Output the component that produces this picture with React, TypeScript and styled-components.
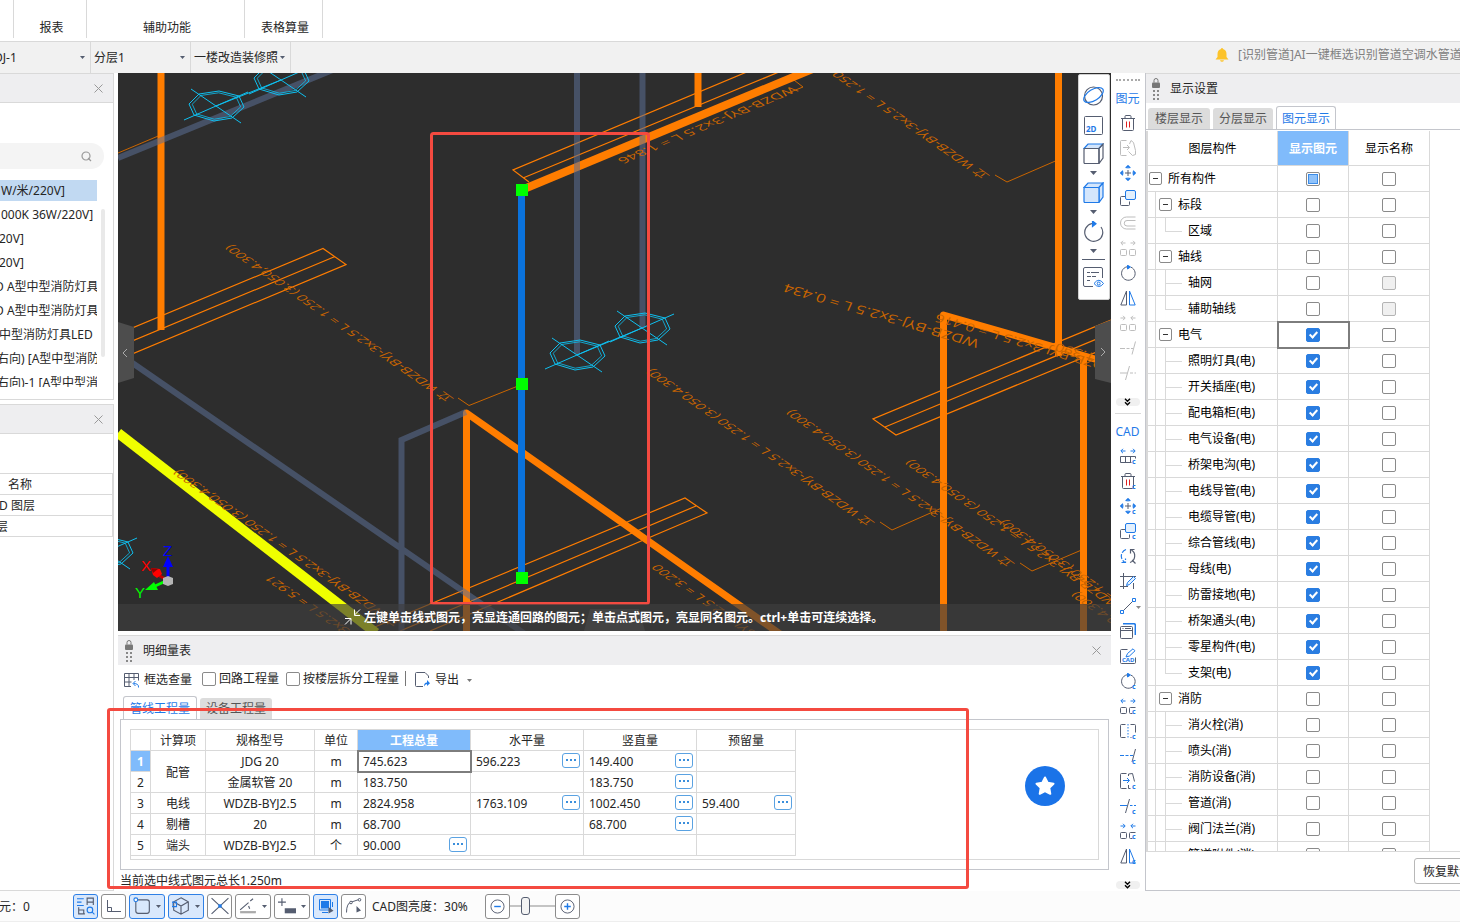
import React from "react";
import styled, { createGlobalStyle, css } from "styled-components";

const INK = "#555d70";
const BLUE = "#1f7ae8";
const LINE = "#d9d9d9";
const MUTE = "#bdbdbd";

const Global = createGlobalStyle`
  *, *::before, *::after { box-sizing: border-box; }
  html, body { margin: 0; padding: 0; background: #fff; }
  body, button, input, select, table {
    font-family: "Noto Sans", "Noto Sans CJK SC", sans-serif;
    font-size: 12px;
    line-height: 16px;
    color: #262626;
  }
  button { background: none; border: 0; padding: 0; margin: 0; }
  svg { display: block; }
`;

/* ---------- page frame ---------- */

const Page = styled.div`
  display: flex;
  flex-direction: column;
  height: 100vh;
  overflow: hidden;
`;

const Ribbon = styled.nav`
  display: flex;
  flex: none;
  height: 42px;
  border-bottom: 1px solid ${LINE};
`;

const RibbonGroup = styled.div<{ $w: number }>`
  width: ${(p) => p.$w}px;
  height: 38px;
  padding: 20px 0 0 3px;
  text-align: center;
  white-space: nowrap;
  border-right: 1px solid ${LINE};
`;

const SubBar = styled.div`
  display: flex;
  flex: none;
  height: 31px;
  background: #f1f1f1;
`;

const Picker = styled.label<{ $w: number; $pad: number }>`
  position: relative;
  display: flex;
  align-items: center;
  width: ${(p) => p.$w}px;
  border-right: 1px solid ${LINE};
  overflow: hidden;
  select {
    appearance: none;
    border: 0;
    background: none;
    width: 90px;
    padding: 0;
    margin-left: ${(p) => p.$pad}px;
    height: 28px;
  }
  svg { position: absolute; right: 5px; top: 14px; }
`;

const Notice = styled.a`
  display: flex;
  align-items: center;
  gap: 9px;
  width: 245px;
  padding-bottom: 5px;
  margin-left: auto;
  color: #808080;
  white-space: nowrap;
  text-decoration: none;
  overflow: hidden;
  svg { flex: none; }
`;

const Main = styled.main`
  display: flex;
  flex: 1;
  min-height: 0;
`;

const LeftColumn = styled.aside`
  display: flex;
  flex: none;
  flex-direction: column;
  gap: 4px;
  width: 114px;
  margin-right: 4px;
`;

const CenterColumn = styled.section`
  display: flex;
  flex: 1;
  flex-direction: column;
  gap: 4px;
  min-width: 0;
`;

/* ---------- shared pieces ---------- */

const PanelHead = styled.header`
  display: flex;
  flex: none;
  align-items: center;
  height: 30px;
  background: #eeeef0;
  border-top: 1px solid ${LINE};
`;

const PanelTitle = styled.h2`
  margin: 0 0 0 10px;
  font-size: 12px;
  font-weight: 400;
`;

const CloseButton = styled.button<{ $gap: number }>`
  margin-left: auto;
  margin-right: ${(p) => p.$gap}px;
`;

const Check = styled.input<{ $partial?: boolean }>`
  appearance: none;
  flex: none;
  position: relative;
  width: 14px;
  height: 14px;
  margin: 0;
  border: 1px solid #8a8a8a;
  border-radius: 2px;
  background: #fff;
  &:disabled { background: #f0f0f0; border-color: #b4b4b4; }
  &:checked { background: #2a7de1; border-color: #2a7de1; }
  &:checked::after {
    content: "";
    position: absolute;
    left: 4px;
    top: 1px;
    width: 5px;
    height: 8px;
    border: solid #fff;
    border-width: 0 2px 2px 0;
    transform: rotate(42deg);
  }
  ${(p) =>
    p.$partial &&
    css`
      &::after {
        content: "";
        position: absolute;
        inset: 1px;
        background: #8fc2fa;
        border: 1px solid #3b8ce8;
      }
    `}
`;

const Tabs = styled.div`
  display: flex;
  flex: none;
  align-items: flex-end;
  height: 23px;
`;

const Tab = styled.button<{ $active?: boolean; $w: number }>`
  width: ${(p) => p.$w}px;
  height: 21px;
  border-radius: 3px 3px 0 0;
  background: #dcdcdc;
  color: #555;
  white-space: nowrap;
  ${(p) =>
    p.$active &&
    css`
      height: 24px;
      margin-bottom: -1px;
      background: #fff;
      border: 1px solid #c4c6cc;
      border-bottom: 0;
      color: ${BLUE};
    `}
`;

const Spacer = styled.span<{ $h: number }>`
  flex: none;
  height: ${(p) => p.$h}px;
`;

const Nudge = styled.span<{ $shift: number }>`
  margin-left: ${(p) => p.$shift}px;
`;

/* ---------- left column ---------- */

const SidePanel = styled.section<{ $grow?: boolean }>`
  display: flex;
  flex-direction: column;
  flex: ${(p) => (p.$grow ? 1 : "none")};
  border-right: 1px solid ${LINE};
  border-bottom: 1px solid ${LINE};
  ${PanelHead} { border-bottom: 1px solid ${LINE}; }
`;

const Search = styled.label`
  display: flex;
  align-items: center;
  height: 26px;
  width: 104px;
  margin: 40px 0 11px;
  padding-right: 12px;
  border-radius: 0 13px 13px 0;
  background: #f4f4f4;
  input {
    flex: 1;
    min-width: 0;
    border: 0;
    background: none;
    outline: 0;
  }
`;

const ListArea = styled.div`
  display: flex;
  height: 207px;
  margin-bottom: 12px;
`;

const List = styled.ul`
  flex: none;
  width: 97px;
  margin: 0;
  padding: 0;
  list-style: none;
  overflow: hidden;
`;

const ListRow = styled.li<{ $shift: number; $on?: boolean }>`
  height: 21px;
  margin-bottom: 3px;
  line-height: 22px;
  white-space: nowrap;
  overflow: hidden;
  text-indent: ${(p) => p.$shift}px;
  background: ${(p) => (p.$on ? "#c1d9f2" : "none")};
`;

const Scroll = styled.div`
  width: 4px;
  height: 148px;
  margin: 29px 0 0 4px;
  border-radius: 2px;
  background: #e9e9e9;
`;

const LayerTable = styled.table`
  width: 113px;
  margin-top: 39px;
  border-spacing: 0;
  border-top: 1px solid ${LINE};
  th, td {
    height: 21px;
    padding: 2px 0 0;
    border-right: 1px solid ${LINE};
    border-bottom: 1px solid ${LINE};
    font-weight: 400;
    text-align: left;
    white-space: nowrap;
  }
  th { padding-left: 8px; }
`;

/* ---------- drawing view ---------- */

const View = styled.div`
  position: relative;
  flex: 1;
  min-height: 0;
  background: #2d2d2d;
  overflow: hidden;
  > svg { width: 100%; height: 100%; }
`;

const Hint = styled.div`
  position: absolute;
  left: 0;
  right: 0;
  bottom: 0;
  display: flex;
  align-items: center;
  gap: 2px;
  height: 27px;
  padding-left: 226px;
  background: rgba(62, 62, 62, 0.66);
  color: #fff;
  font-weight: 700;
  white-space: nowrap;
`;

const ViewTools = styled.div`
  position: absolute;
  top: 1px;
  right: 1px;
  display: flex;
  flex-direction: column;
  align-items: center;
  width: 32px;
  height: 226px;
  padding: 11px 1px 0 0;
  border: 1px solid #d0d0d0;
  border-radius: 2px;
  background: #fff;
`;

const ViewTool = styled.button<{ $h: number }>`
  display: flex;
  flex-direction: column;
  align-items: center;
  gap: 7px;
  height: ${(p) => p.$h}px;
`;

const Rule = styled.hr`
  width: 23px;
  margin: 0 0 7px;
  border: 0;
  border-top: 1px solid ${INK};
`;

/* ---------- detail panel ---------- */

const Detail = styled.section`
  position: relative;
  flex: none;
  display: flex;
  flex-direction: column;
`;

const DetailBar = styled.div`
  display: flex;
  align-items: center;
  height: 27px;
  padding-left: 6px;
  white-space: nowrap;
`;

const BarButton = styled.button<{ $gap: number }>`
  display: flex;
  align-items: center;
  gap: 4px;
  margin-right: ${(p) => p.$gap}px;
  padding-top: 3px;
`;

const BarCheck = styled.label`
  display: flex;
  align-items: center;
  gap: 3px;
  margin-right: 7px;
`;

const Divider = styled.span`
  width: 1px;
  height: 15px;
  margin: 0 9px 0 -1px;
  background: #777;
`;

const DetailTabs = styled(Tabs)`
  gap: 3px;
  margin-top: 4px;
  padding-left: 5px;
  ${Tab} { padding-top: 1px; }
`;

const DetailBody = styled.div`
  margin: 0 2px;
  padding: 9px;
  border: 1px solid #c4c6cc;
`;

const Frame = styled.div`
  border: 1px solid ${LINE};
  padding-bottom: 3px;
`;

const QtyTable = styled.table`
  width: 665px;
  table-layout: fixed;
  border-spacing: 0;
  th, td {
    height: 21px;
    padding: 2px 0 0;
    border-right: 1px solid ${LINE};
    border-bottom: 1px solid ${LINE};
    font-weight: 400;
    text-align: center;
    white-space: nowrap;
  }
`;

const HeadCell = styled.th<{ $on?: boolean }>`
  ${(p) =>
    p.$on &&
    css`
      && { background: #80bbfb; color: #fff; font-weight: 700; }
    `}
`;

const QtyCell = styled.td<{ $on?: boolean }>`
  ${(p) =>
    p.$on &&
    css`
      outline: 2px solid #7d7d7d;
      outline-offset: -1px;
    `}
  > div {
    display: flex;
    align-items: center;
    justify-content: space-between;
    padding: 0 3px 0 5px;
  }
`;

const More = styled.button`
  display: flex;
  align-items: center;
  justify-content: center;
  gap: 2px;
  width: 18px;
  height: 15px;
  margin-bottom: 3px;
  border: 1px solid #5aa2e2;
  border-radius: 3px;
  margin-top: -1px;
  i { width: 2px; height: 2px; background: #3b8fdc; }
`;

const Summary = styled.p`
  height: 21px;
  margin: 0;
  padding: 3px 0 0 2px;
`;

const Highlight = styled.div`
  position: absolute;
  left: -11px;
  right: 142px;
  top: 73px;
  bottom: 2px;
  border: 3px solid #f44a40;
  border-radius: 3px;
  pointer-events: none;
`;

const StarButton = styled.button`
  position: absolute;
  right: 46px;
  top: 131px;
  display: flex;
  align-items: center;
  justify-content: center;
  width: 40px;
  height: 40px;
  border-radius: 50%;
  background: #1a73e8;
`;

/* ---------- edit toolbar ---------- */

const EditBar = styled.div`
  display: flex;
  flex: none;
  flex-direction: column;
  align-items: center;
  width: 34px;
  padding-right: 1px;
  overflow: hidden;
`;

const Grip = styled.div`
  width: 24px;
  height: 2px;
  margin: 6px 0 8px;
  border-top: 2px dotted #aaa;
`;

const BarHead = styled.span`
  height: 20px;
  line-height: 20px;
  color: ${BLUE};
`;

const EditTool = styled.button`
  position: relative;
  display: flex;
  flex: none;
  align-items: center;
  justify-content: center;
  width: 34px;
  height: 25px;
`;

const DropMark = styled.span`
  position: absolute;
  right: 4px;
  bottom: 9px;
`;

const Expander = styled.button`
  display: flex;
  flex: none;
  align-items: center;
  justify-content: center;
  width: 24px;
  height: 8px;
  border-radius: 4px;
  background: #f0f0f0;
`;

const EditRule = styled.hr`
  width: 26px;
  margin: 7px 0 8px;
  border: 0;
  border-top: 1px solid ${LINE};
`;

/* ---------- display settings ---------- */

const RightColumn = styled.aside`
  display: flex;
  flex: none;
  flex-direction: column;
  width: 315px;
  border-left: 1px solid #c4c6cc;
  border-bottom: 1px solid #c4c6cc;
`;

const RightTabs = styled(Tabs)`
  gap: 3px;
  margin-top: 4px;
  padding-left: 2px;
  height: 22px;
`;

const TreeArea = styled.div`
  flex: 1;
  min-height: 0;
  overflow: hidden;
  padding-top: 1px;
  border-top: 1px solid #c4c6cc;
`;

const TreeTable = styled.table`
  width: 284px;
  table-layout: fixed;
  border-spacing: 0;
  border-left: 2px solid ${LINE};
  color: #000;
  th, td {
    height: 26px;
    padding: 0;
    border-right: 1px solid ${LINE};
    border-bottom: 1px solid ${LINE};
    font-weight: 400;
  }
  th { height: 35px; padding-top: 2px; }
`;

const TickCell = styled.td<{ $on?: boolean }>`
  ${(p) =>
    p.$on &&
    css`
      outline: 2px solid #7d7d7d;
      outline-offset: -1px;
    `}
  input { display: block; margin: 0 auto; }
`;

const TreeCell = styled.div`
  display: flex;
  align-items: center;
  height: 25px;
  padding-left: 7px;
  white-space: nowrap;
`;

const Rail = styled.span`
  align-self: stretch;
  width: 10px;
  border-left: 1px solid ${LINE};
`;

const Branch = styled.span<{ $last?: boolean }>`
  position: relative;
  width: 23px;
  align-self: stretch;
  &::before {
    content: "";
    position: absolute;
    left: 0;
    top: 0;
    height: ${(p) => (p.$last ? "50%" : "100%")};
    border-left: 1px solid ${LINE};
  }
  &::after {
    content: "";
    position: absolute;
    left: 0;
    top: 50%;
    width: 17px;
    border-top: 1px solid ${LINE};
  }
`;

const Toggle = styled.button`
  display: flex;
  align-items: center;
  justify-content: center;
  width: 13px;
  height: 13px;
  margin: 0 6px 0 -6px;
  border: 1px solid #8a8a8a;
  border-radius: 2px;
  background: #fff;
  &::after { content: ""; width: 5px; height: 1px; background: #333; }
`;

const RightFoot = styled.footer`
  display: flex;
  flex: none;
  justify-content: flex-end;
  height: 39px;
  padding-top: 6px;
  border-top: 1px solid ${LINE};
  overflow: hidden;
`;

const ResetButton = styled.button`
  flex: none;
  width: 66px;
  height: 26px;
  padding-top: 1px;
  margin-right: -20px;
  border: 1px solid #b8b8b8;
  border-radius: 3px;
`;

/* ---------- status bar ---------- */

const StatusBar = styled.footer`
  display: flex;
  flex: none;
  align-items: center;
  gap: 3px;
  height: 31px;
  background: #fcfcfc;
  border-bottom: 1px solid #eee;
  white-space: nowrap;
`;

const Count = styled.span`
  width: 71px;
  margin-left: -1px;
  padding-top: 1px;
  overflow: hidden;
`;

const StatusButton = styled.button<{ $on?: boolean; $wide?: boolean }>`
  display: flex;
  flex: none;
  align-items: center;
  justify-content: center;
  gap: 5px;
  width: ${(p) => (p.$wide ? 36 : 25)}px;
  height: 25px;
  border: 1px solid ${(p) => (p.$on ? "#2f80e6" : "#8c8c8c")};
  border-radius: 3px;
  background: ${(p) => (p.$on ? "#d9e8fc" : "#fff")};
`;

const Brightness = styled.label`
  width: 113px;
  margin-left: 3px;
  padding-top: 1px;
`;

const Zoomer = styled.div`
  display: flex;
  align-items: center;
  margin-left: -3px;
`;

const Range = styled.input`
  appearance: none;
  width: 45px;
  height: 20px;
  margin: 0;
  background: none;
  &::-webkit-slider-runnable-track { height: 2px; background: #c4c4c4; }
  &::-webkit-slider-thumb {
    appearance: none;
    width: 9px;
    height: 18px;
    margin-top: -8px;
    border: 1px solid ${INK};
    border-radius: 3px;
    background: #f4f4f4;
  }
`;

/* ---------- icons ---------- */

type IcoProps = { children: React.ReactNode; size?: number; color?: string };
const Ico = ({ children, size = 16, color = INK }: IcoProps) => (
  <svg width={size} height={size} viewBox="0 0 16 16" fill="none" stroke={color} strokeWidth="1" aria-hidden="true">
    {children}
  </svg>
);

const Caret = ({ w = 5, color = INK }: { w?: number; color?: string }) => (
  <svg width={w} height={w > 5 ? 4 : 3} viewBox="0 0 6 3" preserveAspectRatio="none" aria-hidden="true">
    <path d="M0 0h6L3 3z" fill={color} />
  </svg>
);

const CloseIcon = () => (
  <svg width="9" height="9" viewBox="0 0 9 9" stroke="#999" aria-hidden="true">
    <path d="M.5.5l8 8M8.500.5l-8 8" />
  </svg>
);

const LockGrip = () => (
  <svg width="8" height="22" viewBox="0 0 8 22" aria-hidden="true">
    <path d="M2 4.500V2.500a2 2 0 0 1 4 0V4.500" fill="none" stroke="#777" />
    <rect x="0" y="4.500" width="8" height="5.500" rx="1" fill="#777" />
    <g fill="#888">
      {[12, 16, 20].map((y) => (
        <g key={y}>
          <rect x="1" y={y} width="2" height="2" />
          <rect x="5" y={y} width="2" height="2" />
        </g>
      ))}
    </g>
  </svg>
);

const C = () => (
  <text x="12" y="16" fontSize="7" fontWeight="700" fill={BLUE} stroke="none">
    c
  </text>
);

const DoubleDown = () => (
  <svg width="7" height="8" viewBox="0 0 7 8" fill="none" stroke="#000" strokeWidth="1.400" aria-hidden="true">
    <path d="M1 .7l2.500 2.500L6 .7M1 4.200l2.500 2.500L6 4.200" />
  </svg>
);

const trash = (
  <>
    <path d="M1 3.500h14M5 3V1.500Q5 .5 6 .5h4q1 0 1 1V3M2.500 3.500v11q0 1 1 1h9q1 0 1-1v-11" />
    <path d="M6.500 6.500v6M9.500 6.500v6" stroke="#e02020" />
  </>
);
const move = (
  <>
    <path d="M8 5v6M5 8h6" />
    <path
      d="M8 3.500V.7M5.700 3L8 .7 10.300 3M8 12.500v2.800M5.700 13L8 15.300l2.300-2.300M3.500 8H.7M3 5.700L.7 8 3 10.300M12.500 8h2.800M13 5.700L15.300 8 13 10.300"
      stroke={BLUE}
      strokeWidth="1.300"
    />
  </>
);
const copy = (
  <>
    <path d="M5.500 6.500h-4q-1 0-1 1v7q0 1 1 1h7q1 0 1-1v-3" />
    <rect x="5.500" y=".5" width="10" height="9" rx="1.500" fill="#e3f0fd" stroke={BLUE} />
  </>
);
const rotate = (
  <>
    <path d="M11 2.200A6.800 6.800 0 1 1 7 1.800" />
    <path d="M7.500.2L10.500 2 7.500 4z" fill={BLUE} stroke={BLUE} />
  </>
);
const mirror = (
  <>
    <path d="M6.500 1v14H.8z" />
    <path d="M9.500 1v14h5.700z" stroke={BLUE} />
  </>
);
const twoBoxes = (
  <path d="M1.500 9.500h4q1 0 1 1v4q0 1-1 1h-4q-1 0-1-1v-4q0-1 1-1zM10.500 9.500h4q1 0 1 1v4q0 1-1 1h-4q-1 0-1-1v-4q0-1 1-1z" />
);
const outArrows = "M5.500 3H1M3 .8L.8 3 3 5.200M10.500 3H15M13 .8L15.200 3 13 5.200";
const inArrows = "M.5 3h4.500M3 .8L5.200 3 3 5.200M15.500 3H11M13 .8L10.800 3 13 5.200";

const elementTools: [string, React.ReactNode][] = [
  ["删除", <Ico>{trash}</Ico>],
  ["复制到", <Ico color={MUTE}><path d="M6.500.5h-5q-1 0-1 1v13q0 1 1 1h5M3 7.500h6M7 5l2.500 2.500L7 10M9.500 4L11 .5l2.500 2 2 8v4l-3 1-4-4" /></Ico>],
  ["移动", <Ico>{move}</Ico>],
  ["复制", <Ico>{copy}</Ico>],
  ["偏移", <Ico color={MUTE}><path d="M15.500 2H6.500a6 6 0 0 0 0 12h9M15.500 5.500H7a2.700 2.700 0 0 0 0 5.500h8.500" /></Ico>],
  ["打断", <Ico color={MUTE}><path d={outArrows} />{twoBoxes}</Ico>],
  ["旋转", <Ico>{rotate}</Ico>],
  ["镜像", <Ico>{mirror}</Ico>],
  ["合并", <Ico color={MUTE}><path d={inArrows} />{twoBoxes}</Ico>],
  ["延伸", <Ico color={MUTE}><path d="M0 8.500h5M6.500 8.500h3M11 8.500h2M15.500 1.500l-3.500 13" /></Ico>],
  ["修剪", <Ico color={MUTE}><path d="M0 8h7M10 8h3M14.500 8h1.500M9.500 1L5.500 15" /></Ico>],
];

const cadTools: [string, React.ReactNode][] = [
  ["设置比例", <Ico><path d={outArrows} stroke={BLUE} /><path d="M11.500 14.500H.5v-6h15v2M5.500 8.500v6M10.500 8.500v6" /><C /></Ico>],
  ["C删除", <Ico>{trash}<C /></Ico>],
  ["C移动", <Ico>{move}<C /></Ico>],
  ["C复制", <Ico>{copy}<C /></Ico>],
  ["还原CAD", <Ico><path d="M6 1.500A7 7 0 0 0 4.500 14M1.500 14.500h4v-4" stroke={BLUE} strokeWidth="1.200" strokeDasharray="5 1.500" /><path d="M10 14.500A7 7 0 0 0 11.500 2M14.500 1.500h-4v4M12 12l3.500 3.500" strokeWidth="1.200" /></Ico>],
  ["裁剪", <Ico><path d="M3.500 0v16M0 3.500h16M0 13.500h8M13.500 10v6" /><path d="M6.500 12.500l1-3 6-6 2 2-6 6z" stroke={BLUE} fill="#e3f0fd" /></Ico>],
  ["直线", <Ico><path d="M2 14L14 2" /><path d="M.5 12.500h3v3h-3zM12.500.5h3v3h-3z" stroke={BLUE} fill="#fff" /></Ico>],
  ["窗口", <Ico><rect x=".5" y="3.500" width="12" height="12" rx="1" /><path d="M.5 7.500h12M2.500 5.500h1M5 5.500h6" /><path d="M3 .8h11q1.300 0 1.300 1.200v10" stroke={BLUE} strokeWidth="1.500" /></Ico>],
  ["编辑CAD", <Ico><path d="M7.500 1.500h-6q-1 0-1 1v12q0 1 1 1h13q1 0 1-1v-5" /><path d="M6 9l1.500-3.500L13 .8l2 2L9.500 8z" stroke={BLUE} /><text x="2" y="14" fontSize="6" fontWeight="700" fill={BLUE} stroke="none">CAD</text></Ico>],
  ["C旋转", <Ico>{rotate}<C /></Ico>],
  ["C打断", <Ico><path d={outArrows} stroke={BLUE} /><path d="M1.500 9.500h4q1 0 1 1v4q0 1-1 1h-4q-1 0-1-1v-4q0-1 1-1zM15.500 9.500h-5q-1 0-1 1v4q0 1 1 1h2" /><C /></Ico>],
  ["C分割", <Ico><path d="M5.500 1.500h-4q-1 0-1 1v11q0 1 1 1h4M10.500 1.500h4q1 0 1 1v7M10.500 14.500h1" /><path d="M8 1v14" stroke={BLUE} strokeDasharray="1.500 1.500" /><C /></Ico>],
  ["C延伸", <Ico><path d="M0 7.500h4M5.500 7.500h3M10 7.500h3" stroke={BLUE} /><path d="M15.500 1l-3.500 13" /><C /></Ico>],
  ["C复制到", <Ico><path d="M6.500.5h-5q-1 0-1 1v13q0 1 1 1h5M8.500 3V1l4-.5 2 8M8.500 12v3.500h2" /><path d="M3 7.500h6M7 5l2.500 2.500L7 10" stroke={BLUE} /><C /></Ico>],
  ["C修剪", <Ico><path d="M0 7.500h7M10 7.500h2.500M14 7.500h2" stroke={BLUE} /><path d="M9.500 1L5.500 15" /><C /></Ico>],
  ["C合并", <Ico><path d={inArrows} stroke={BLUE} /><path d="M1.500 9.500h4q1 0 1 1v4q0 1-1 1h-4q-1 0-1-1v-4q0-1 1-1zM15.500 9.500h-5q-1 0-1 1v4q0 1 1 1h2" /><C /></Ico>],
  ["C镜像", <Ico>{mirror}<C /></Ico>],
];

const Cube = ({ filled }: { filled?: boolean }) => (
  <svg width="21" height="21" viewBox="0 0 21 21" fill="none" stroke={filled ? BLUE : INK} strokeWidth="1.200" aria-hidden="true">
    <path d="M1 5.500L5 1h15l-4 4.500z" fill="#d4e6fc" stroke={BLUE} />
    <path d="M16 5.500L20 1v14l-4 5.500z" fill={filled ? "#d4e6fc" : "none"} />
    <rect x="1" y="5.500" width="15" height="15" rx="1" fill={filled ? "#d4e6fc" : "none"} />
  </svg>
);

/* ---------- drawing content ---------- */

const OCT = [[-17, -12], [3, -15], [23, -10], [28, 1], [16, 12], [-2, 15], [-22, 9], [-27, -2]];
const poly = (k: number) => OCT.map(([x, y]) => `${x * k},${y * k}`).join(" ");

const Lamp = ({ x, y }: { x: number; y: number }) => (
  <g transform={`translate(${x} ${y})`} fill="none" stroke="#0fc0f0" strokeWidth="1">
    <polygon points={poly(1)} />
    <polygon points={poly(0.88)} opacity=".8" />
    <path d="M-25-17L25 17M-32 14L32-14" />
  </g>
);

/* Text laid on the floor plane: each axis holds the reading direction and the glyph-down direction. */
const AXES = {
  a: "-0.82 -0.57 0.82 -0.34",
  b: "-0.923 0.385 -0.6 -0.42",
  c: "-0.96 -0.28 0.3 -0.66",
};

type NoteProps = { x: number; y: number; axis?: keyof typeof AXES; size?: number; children: React.ReactNode };
const Note = ({ x, y, axis = "a", size = 14, children }: NoteProps) => (
  <text
    transform={`matrix(${AXES[axis]} ${x} ${y})`}
    fontSize={size}
    fill="#c96500"
    fontFamily='"Open Sans", "Noto Sans CJK SC", sans-serif'
  >
    {children}
  </text>
);

const RISER = "立 WDZB-BYJ-3x2.5 L = 1.250 (3.050,4.300)";

const Drawing = () => (
  <svg viewBox="118 73 993 558" preserveAspectRatio="xMidYMid slice" role="img" aria-label="三维管线视图">
    <g fill="none" stroke="#ff7d00" strokeWidth="1.200">
      <path d="M118 334L323 248.500L346 264.500L118 360M118 347L335 256.500" />
      <path d="M835 35L513 170L529 182M820 55L523 178" />
      <path d="M370 629L685 498L707 513L430 631M400 631L696 506" />
      <path d="M1111 320L873 419L896 435L1111 346M1111 333L885 427" />
    </g>
    <g fill="none" stroke="#c96500">
      <path d="M118 153L163 134" />
      <path d="M458 398L469 405.500L518 386" />
      <path d="M995 175L1007 182L1060 159" />
      <path d="M880 522L892 530L944 507" />
      <path d="M1020 563L1032 571L1084 549" />
      <path d="M788 93L803 87L790 77" />
    </g>
    <g fill="none" stroke="#ff7d00" strokeWidth="7">
      <path d="M161 73V330M698 73V107M1058.500 73V356" />
      <path d="M524 189L815 68" strokeWidth="8" />
      <path d="M943.500 631V315L1058 348L1111 364M1083.500 356V631" strokeLinejoin="round" />
      <path d="M466.500 631V413L783 636" strokeLinejoin="round" />
    </g>
    <path d="M118 433L376 633" stroke="#f0ff00" strokeWidth="10" />
    <path d="M521.500 190V578" stroke="#0a72dc" strokeWidth="7" />
    <g fill="none" stroke="#5b6f96" strokeOpacity=".55" strokeWidth="6">
      <path d="M118 158L335 69M577 73V354M642.500 73V328" />
      <path d="M118 353L525 634M401.500 631V440L466 412" />
    </g>
    <path d="M216 106L281 80M577 355L642 328" stroke="#0fc0f0" />
    <Lamp x={216} y={106} />
    <Lamp x={281} y={80} />
    <Lamp x={577} y={355} />
    <Lamp x={642} y={328} />
    <Lamp x={105} y={552} />

    <Note x={454} y={399}>{RISER}</Note>
    <Note x={875} y={523}>{RISER}</Note>
    <Note x={1015} y={564}>{RISER}</Note>
    <Note x={1134} y={614}>{RISER}</Note>
    <Note x={1228} y={674}>{RISER}</Note>
    <Note x={1300} y={746}>{RISER}</Note>
    <Note x={990} y={176}>{RISER}</Note>
    <Note x={402} y={624}>{RISER}</Note>
    <Note x={408} y={670}>WDZB-BYJ-3x2.5 L = 5.921</Note>
    <Note x={795} y={659}>WDZB-BYJ-3x2.5 L = 3.200</Note>
    <Note x={792} y={86} axis="b" size={16}>WDZB-BYJ-3x2.5 L = 1.846</Note>
    <Note x={980} y={340} axis="c" size={17}>WDZB-BYJ-3x2.5 L = 0.434</Note>
    <Note x={1120} y={367} axis="c" size={16}>WDZB-BYJ-3x2.5 L = 0.416</Note>
    <Note x={1240} y={396} axis="c" size={16}>WDZB-BYJ-3x2.5 L = 1.390</Note>

    <g fill="#00ff00">
      <rect x="516" y="184" width="12" height="12" />
      <rect x="516" y="378" width="12" height="12" />
      <rect x="516" y="572" width="12" height="12" />
    </g>
    <rect x="431.500" y="133.500" width="217" height="470" rx="2" fill="none" stroke="#f44a40" strokeWidth="3" />

    <g strokeWidth="3" fill="none">
      <path d="M168 578V566" stroke="#0000ff" />
      <path d="M167 580L158 575" stroke="#c00000" />
      <path d="M166 581L155 586" stroke="#00ff00" />
    </g>
    <path d="M168 556L173 567H163z" fill="#0000ff" />
    <path d="M151 568L160 569L162 574L157 578L153 575z" fill="#ff0000" />
    <path d="M151 568L158 569L153 573z" fill="#900000" />
    <path d="M145 590L154 582L158 590z" fill="#00ff00" />
    <path d="M163 578L168 576L173 578V584L168 586L163 584z" fill="#b5b5b5" />
    <g fontSize="15" fontFamily='"Liberation Sans", sans-serif'>
      <text x="141" y="571" fill="#ff0000">X</text>
      <text x="135" y="598" fill="#00ff00">Y</text>
      <text x="163" y="556" fill="#0000ff">Z</text>
    </g>

    <path d="M118 322L134 327V378L118 383z" fill="#4d4d4d" />
    <path d="M127 349l-4 4 4 4" fill="none" stroke="#aaa" />
    <path d="M1111 320L1095 326V379L1111 383z" fill="#4d4d4d" />
    <path d="M1101 348l4 4-4 4" fill="none" stroke="#aaa" />
    <path d="M584 631L590 609H639L645 631z" fill="#4d4d4d" />
  </svg>
);

/* ---------- data ---------- */

const components: [string, number, boolean?][] = [
  ["W/米/220V]", 1, true],
  ["000K 36W/220V]", 1],
  ["20V]", -1],
  ["20V]", -1],
  ["D A型中型消防灯具", -5],
  ["D A型中型消防灯具", -5],
  ["中型消防灯具LED", -1],
  ["右向) [A型中型消防灯具", -3],
  ["右向)-1 [A型中型消防", -3],
];

type Qty = { no: number; spec: string; unit: string; item?: string; span?: number; vals: [string, boolean][] };
const quantities: Qty[] = [
  { no: 1, item: "配管", span: 2, spec: "JDG 20", unit: "m", vals: [["745.623", false], ["596.223", true], ["149.400", true], ["", false]] },
  { no: 2, spec: "金属软管 20", unit: "m", vals: [["183.750", false], ["", false], ["183.750", true], ["", false]] },
  { no: 3, item: "电线", spec: "WDZB-BYJ2.5", unit: "m", vals: [["2824.958", false], ["1763.109", true], ["1002.450", true], ["59.400", true]] },
  { no: 4, item: "剔槽", spec: "20", unit: "m", vals: [["68.700", false], ["", false], ["68.700", true], ["", false]] },
  { no: 5, item: "端头", spec: "WDZB-BYJ2.5", unit: "个", vals: [["90.000", true], ["", false], ["", false], ["", false]] },
];
const qtyWidths = [20, 55, 109, 43, 113, 113, 113, 99];
const qtyHeads = ["", "计算项", "规格型号", "单位", "工程总量", "水平量", "竖直量", "预留量"];

const groups: { name: string; on: boolean; items: string[] }[] = [
  { name: "标段", on: false, items: ["区域"] },
  { name: "轴线", on: false, items: ["轴网", "辅助轴线"] },
  {
    name: "电气",
    on: true,
    items: ["照明灯具(电)", "开关插座(电)", "配电箱柜(电)", "电气设备(电)", "桥架电沟(电)", "电线导管(电)", "电缆导管(电)", "综合管线(电)", "母线(电)", "防雷接地(电)", "桥架通头(电)", "零星构件(电)", "支架(电)"],
  },
  { name: "消防", on: false, items: ["消火栓(消)", "喷头(消)", "消防设备(消)", "管道(消)", "阀门法兰(消)", "管道附件(消)", "通头管件(消)"] },
];

/* ---------- sections ---------- */

const TopPicker = ({ w, pad, value, label }: { w: number; pad: number; value: string; label: string }) => (
  <Picker $w={w} $pad={pad}>
    <select aria-label={label} defaultValue={value}>
      <option>{value}</option>
    </select>
    <Caret />
  </Picker>
);

const LeftPanels = () => (
  <LeftColumn>
    <SidePanel>
      <PanelHead>
        <CloseButton $gap={10} aria-label="关闭"><CloseIcon /></CloseButton>
      </PanelHead>
      <Search>
        <input type="text" aria-label="搜索构件" />
        <svg width="11" height="11" viewBox="0 0 11 11" fill="none" stroke="#999" strokeWidth="1.200" aria-hidden="true">
          <circle cx="5" cy="5" r="4" />
          <path d="M7 7l3 3" />
        </svg>
      </Search>
      <ListArea>
        <List>
          {components.map(([name, shift, on], i) => (
            <ListRow key={i} $shift={shift} $on={on}>{name}</ListRow>
          ))}
        </List>
        <Scroll />
      </ListArea>
    </SidePanel>
    <SidePanel $grow>
      <PanelHead>
        <CloseButton $gap={10} aria-label="关闭"><CloseIcon /></CloseButton>
      </PanelHead>
      <LayerTable>
        <thead><tr><th>名称</th></tr></thead>
        <tbody>
          <tr><td><Nudge $shift={-1}>D 图层</Nudge></td></tr>
          <tr><td><Nudge $shift={-4}>层</Nudge></td></tr>
        </tbody>
      </LayerTable>
    </SidePanel>
  </LeftColumn>
);

const ViewPanel = () => (
  <View>
    <Drawing />
    <Hint>
      <svg width="18" height="18" viewBox="0 0 18 18" fill="none" stroke="#fff" aria-hidden="true">
        <path d="M16 .5l-5.500 5.500M10.500.5v6h5.500M1 15.500l5.500-5.500M1 9.500h6v6" />
      </svg>
      左键单击线式图元，亮显连通回路的图元；单击点式图元，亮显同名图元。ctrl+单击可连续选择。
    </Hint>
    <ViewTools>
      <ViewTool $h={30} aria-label="动态观察">
        <svg width="21" height="20" viewBox="0 0 21 20" fill="none" strokeWidth="1.200" aria-hidden="true">
          <circle cx="10.500" cy="10" r="9" stroke={INK} />
          <ellipse cx="10.500" cy="9" rx="11" ry="5.500" transform="rotate(-32 10.500 9)" stroke={BLUE} />
        </svg>
      </ViewTool>
      <ViewTool $h={27} aria-label="二维视图">
        <svg width="19" height="19" viewBox="0 0 19 19" fill="none" stroke={INK} aria-hidden="true">
          <rect x=".5" y=".5" width="18" height="18" rx="1" />
          <text x="2" y="16" fontSize="8" fontWeight="700" fill={BLUE} stroke="none">2D</text>
        </svg>
      </ViewTool>
      <ViewTool $h={39} aria-label="视图方向"><Cube /><Caret w={7} /></ViewTool>
      <ViewTool $h={39} aria-label="显示样式"><Cube filled /><Caret w={7} /></ViewTool>
      <ViewTool $h={38} aria-label="旋转视图">
        <svg width="21" height="21" viewBox="0 0 21 21" fill="none" stroke={INK} strokeWidth="1.200" aria-hidden="true">
          <path d="M18 6A9 9 0 1 1 9 2.500" />
          <path d="M9.500 0L13 2.700 9.500 5.500z" fill={BLUE} stroke={BLUE} />
        </svg>
        <Caret w={7} />
      </ViewTool>
      <Rule />
      <ViewTool $h={24} aria-label="显示设置">
        <svg width="21" height="21" viewBox="0 0 21 21" fill="none" stroke={INK} aria-hidden="true">
          <path d="M10 19.500H2q-1.500 0-1.500-1.500V2Q.500.500 2 .500h16q1.500 0 1.500 1.500v9M4 5.500h3M8 5.500h8M4 9.500h4M9 9.500h4M4 13.500h3" />
          <path d="M11 16.500q5-6.500 9.500 0-4.500 6-9.500 0z" stroke={BLUE} fill="#fff" />
          <circle cx="15.700" cy="16.500" r="1.500" stroke={BLUE} />
        </svg>
      </ViewTool>
    </ViewTools>
  </View>
);

const DetailPanel = () => (
  <Detail>
    <PanelHead>
      <Nudge $shift={7}><LockGrip /></Nudge>
      <PanelTitle>明细量表</PanelTitle>
      <CloseButton $gap={10} aria-label="关闭"><CloseIcon /></CloseButton>
    </PanelHead>
    <DetailBar>
      <BarButton $gap={10}>
        <Ico>
          <path d="M7 14.500H.5V1.500h14v7M.5 5.500h14M.5 10h7M5 1.500v13M10 1.500V8" />
          <path d="M14.500 15.500q.5-4-5-4M11.500 9l-2.500 2.500L11.500 14" stroke={BLUE} />
        </Ico>
        框选查量
      </BarButton>
      <BarCheck><Check type="checkbox" />回路工程量</BarCheck>
      <BarCheck><Check type="checkbox" />按楼层拆分工程量</BarCheck>
      <Divider />
      <BarButton $gap={0}>
        <Ico>
          <path d="M8 14.500H1.500q-1 0-1-1v-12q0-1 1-1H10l3.500 3.500v2" />
          <path d="M9 14.500q0-4 3-4V8l3 3.200-3 2.800v-2q-2 0-3 2.500z" fill={BLUE} stroke="none" />
        </Ico>
        导出
        <Nudge $shift={4}><Caret color="#777" /></Nudge>
      </BarButton>
    </DetailBar>
    <DetailTabs role="tablist">
      <Tab $w={74} $active role="tab" aria-selected="true">管线工程量</Tab>
      <Tab $w={72} role="tab">设备工程量</Tab>
    </DetailTabs>
    <DetailBody>
      <Frame>
        <QtyTable>
          <colgroup>{qtyWidths.map((w, i) => <col key={i} width={w} />)}</colgroup>
          <thead>
            <tr>{qtyHeads.map((h, i) => <HeadCell key={i} $on={i === 4}>{h}</HeadCell>)}</tr>
          </thead>
          <tbody>
            {quantities.map((q) => (
              <tr key={q.no}>
                <HeadCell $on={q.no === 1}>{q.no}</HeadCell>
                {q.item && <td rowSpan={q.span}>{q.item}</td>}
                <td>{q.spec}</td>
                <td>{q.unit}</td>
                {q.vals.map(([v, more], i) => (
                  <QtyCell key={i} $on={q.no === 1 && i === 0}>
                    <div>
                      {v}
                      {more && <More aria-label="查看明细"><i /><i /><i /></More>}
                    </div>
                  </QtyCell>
                ))}
              </tr>
            ))}
          </tbody>
        </QtyTable>
      </Frame>
    </DetailBody>
    <Summary>当前选中线式图元总长1.250m</Summary>
    <StarButton aria-label="收藏">
      <svg width="24" height="24" viewBox="0 0 24 24" aria-hidden="true">
        <path
          d="M12 3.500l2.700 5.300 5.800.9-4.200 4.200 1 5.900L12 17l-5.300 2.800 1-5.900L3.500 9.700l5.800-.9z"
          fill="#fff"
          stroke="#fff"
          strokeWidth="2"
          strokeLinejoin="round"
        />
      </svg>
    </StarButton>
    <Highlight />
  </Detail>
);

const EditTools = () => (
  <EditBar>
    <Grip />
    <BarHead>图元</BarHead>
    <Spacer $h={1} />
    {elementTools.map(([name, icon]) => <EditTool key={name} aria-label={name}>{icon}</EditTool>)}
    <Spacer $h={13} />
    <Expander aria-label="更多图元工具"><DoubleDown /></Expander>
    <EditRule />
    <BarHead>CAD</BarHead>
    <Spacer $h={1} />
    {cadTools.map(([name, icon]) => (
      <EditTool key={name} aria-label={name}>
        {icon}
        {name === "直线" && <DropMark><Caret color="#888" /></DropMark>}
      </EditTool>
    ))}
    <Spacer $h={13} />
    <Expander aria-label="更多CAD工具"><DoubleDown /></Expander>
  </EditBar>
);

const DisplayPanel = () => (
  <RightColumn>
    <PanelHead>
      <Nudge $shift={6}><LockGrip /></Nudge>
      <PanelTitle>显示设置</PanelTitle>
    </PanelHead>
    <RightTabs role="tablist">
      <Tab $w={62} role="tab">楼层显示</Tab>
      <Tab $w={60} role="tab">分层显示</Tab>
      <Tab $w={60} $active role="tab" aria-selected="true">图元显示</Tab>
    </RightTabs>
    <TreeArea>
      <TreeTable>
        <colgroup><col width={130} /><col width={71} /><col width={81} /></colgroup>
        <thead>
          <tr><HeadCell>图层构件</HeadCell><HeadCell $on>显示图元</HeadCell><HeadCell>显示名称</HeadCell></tr>
        </thead>
        <tbody>
          <tr>
            <td><TreeCell><Toggle aria-label="折叠所有构件" />所有构件</TreeCell></td>
            <TickCell><Check type="checkbox" $partial aria-label="显示所有构件" /></TickCell>
            <TickCell><Check type="checkbox" aria-label="显示所有构件名称" /></TickCell>
          </tr>
          {groups.map((g) => (
            <React.Fragment key={g.name}>
              <tr>
                <td><TreeCell><Rail /><Toggle aria-label={`折叠${g.name}`} />{g.name}</TreeCell></td>
                <TickCell $on={g.on}><Check type="checkbox" defaultChecked={g.on} aria-label={`显示${g.name}`} /></TickCell>
                <TickCell><Check type="checkbox" aria-label={`显示${g.name}名称`} /></TickCell>
              </tr>
              {g.items.map((item, i) => (
                <tr key={item}>
                  <td><TreeCell><Rail /><Branch $last={i === g.items.length - 1} />{item}</TreeCell></td>
                  <TickCell><Check type="checkbox" defaultChecked={g.on} aria-label={`显示${item}`} /></TickCell>
                  <TickCell><Check type="checkbox" disabled={g.name === "轴线"} aria-label={`显示${item}名称`} /></TickCell>
                </tr>
              ))}
            </React.Fragment>
          ))}
        </tbody>
      </TreeTable>
    </TreeArea>
    <RightFoot><ResetButton>恢复默认</ResetButton></RightFoot>
  </RightColumn>
);

const Status = () => (
  <StatusBar>
    <Count>元：0</Count>
    <StatusButton $on aria-label="拾取构件">
      <Ico size={18}>
        <path d="M0 1.500h6M0 4.500h4M0 7.500h6" stroke={BLUE} />
        <path d="M9 7V1h5.500v6M9 4.500h5.500M1.500 9v6H7M1.500 11.500H6V15" />
        <circle cx="11.500" cy="11.500" r="2.500" stroke={BLUE} />
        <path d="M13.500 13.500l2 2" stroke={BLUE} />
      </Ico>
    </StatusButton>
    <StatusButton aria-label="正交"><Ico><path d="M1.500 2v11.500H15M1.500 9.500h4v4" /></Ico></StatusButton>
    <StatusButton $on $wide aria-label="对象捕捉">
      <Ico size={18}><rect x="2.500" y="2.500" width="12" height="12" rx="2" /><circle cx="2.500" cy="2.500" r="1.700" fill="#fff" stroke={BLUE} /></Ico>
      <Caret />
    </StatusButton>
    <StatusButton $on $wide aria-label="三维捕捉">
      <Ico size={18}><path d="M8 .7l6.500 3.600v7.400L8 15.300 1.500 11.700V4.300zM1.500 4.300L8 8l6.500-3.700M8 8v7.300" /><path d="M0 8.500V4.500h4v4z" stroke={BLUE} /></Ico>
      <Caret />
    </StatusButton>
    <StatusButton aria-label="交点"><Ico size={18}><path d="M.5 1l15 14M15.500 1L.5 15" /><rect x="6.500" y="6.500" width="3" height="3" fill={BLUE} stroke="none" /></Ico></StatusButton>
    <StatusButton $wide aria-label="角度"><Ico size={18}><path d="M1 11.500L8.500 5M10 3.500L12.500 1.500M8.500 8l1 2.500" /><path d="M1 13.500h14" stroke="#aaa" strokeWidth="2" /></Ico><Caret /></StatusButton>
    <StatusButton $wide aria-label="动态输入"><Ico size={18}><path d="M0 4.500h7M3.500 1v7" /><rect x="6" y="10" width="10" height="4.500" fill={INK} stroke="none" /></Ico><Caret /></StatusButton>
    <StatusButton $on aria-label="选择模式">
      <Ico>
        <rect x="3" y="3" width="8" height="7.500" fill={BLUE} stroke="none" />
        <path d="M1.500 1.500h11v10.500h-11zM14.500 4v5M4 14.500h6" stroke={BLUE} />
        <path d="M10.500 9l5 3.700-5 2.800z" fill={INK} stroke="none" />
      </Ico>
    </StatusButton>
    <StatusButton aria-label="路径选择"><Ico><path d="M.5 14.500Q.5 5 5.500 4L13 1.500" /><circle cx="5" cy="4.500" r="1.300" fill="#fff" /><circle cx="13.500" cy="1.800" r="1.300" fill="#fff" /><path d="M10.500 8l4.500 4.500-4.500 2z" fill={INK} stroke="none" /></Ico></StatusButton>
    <Brightness htmlFor="brightness">CAD图亮度：30%</Brightness>
    <Zoomer>
      <StatusButton aria-label="降低亮度"><Ico size={15}><circle cx="8" cy="8" r="7" /><path d="M4.500 8h7" stroke={BLUE} strokeWidth="1.500" /></Ico></StatusButton>
      <Range id="brightness" type="range" min={0} max={100} defaultValue={30} />
      <StatusButton aria-label="提高亮度"><Ico size={15}><circle cx="8" cy="8" r="7" /><path d="M4.500 8h7M8 4.500v7" stroke={BLUE} strokeWidth="1.500" /></Ico></StatusButton>
    </Zoomer>
  </StatusBar>
);

export default function App() {
  return (
    <Page>
      <Global />
      <Ribbon>
        <RibbonGroup $w={14} />
        <RibbonGroup $w={73}>报表</RibbonGroup>
        <RibbonGroup $w={158}>辅助功能</RibbonGroup>
        <RibbonGroup $w={78}>表格算量</RibbonGroup>
      </Ribbon>
      <SubBar>
        <TopPicker w={91} pad={-6} value="DJ-1" label="楼层" />
        <TopPicker w={100} pad={3} value="分层1" label="分层" />
        <TopPicker w={100} pad={3} value="一楼改造装修照" label="图纸" />
        <Notice href="#notice">
          <svg width="14" height="14" viewBox="0 0 14 14" aria-hidden="true">
            <path d="M7 0q1 0 1 1 3.500 1 3.500 5v3l2 2.500H.5L2.500 9V6q0-4 3.500-5 0-1 1-1zM5 12.300h4q-.5 1.500-2 1.500t-2-1.500z" fill="#fcc32a" />
          </svg>
          [识别管道]AI一键框选识别管道空调水管道
        </Notice>
      </SubBar>
      <Main>
        <LeftPanels />
        <CenterColumn>
          <ViewPanel />
          <DetailPanel />
        </CenterColumn>
        <EditTools />
        <DisplayPanel />
      </Main>
      <Status />
    </Page>
  );
}
